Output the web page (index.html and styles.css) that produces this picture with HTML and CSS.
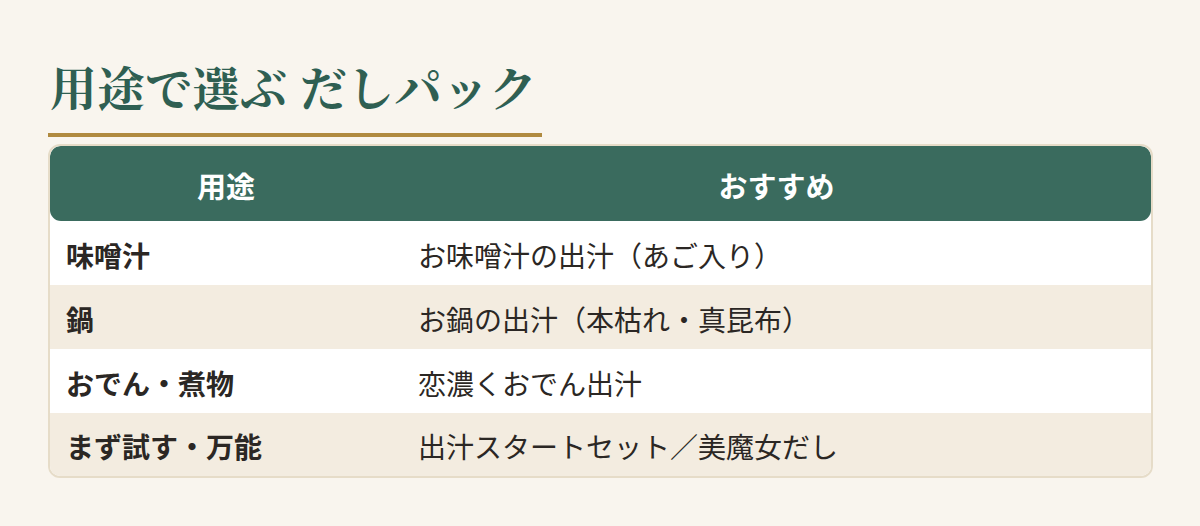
FILE: index.html
```html
<!DOCTYPE html>
<html lang="ja">
<head>
<meta charset="utf-8">
<title>用途で選ぶ だしパック</title>
<link rel="stylesheet" href="styles.css">
</head>
<body>
<main class="page">
  <h2 class="title">用途で選ぶ だしパック</h2>
  <div class="table">
    <div class="head">
      <div class="hcell">用途</div>
      <div class="hcell">おすすめ</div>
    </div>
    <div class="row">
      <div class="c1">味噌汁</div>
      <div class="c2">お味噌汁の出汁（あご入り）</div>
    </div>
    <div class="row alt">
      <div class="c1">鍋</div>
      <div class="c2">お鍋の出汁（本枯れ・真昆布）</div>
    </div>
    <div class="row">
      <div class="c1">おでん・煮物</div>
      <div class="c2">恋濃くおでん出汁</div>
    </div>
    <div class="row alt last">
      <div class="c1">まず試す・万能</div>
      <div class="c2">出汁スタートセット／美魔女だし</div>
    </div>
  </div>
</main>
</body>
</html>
```
FILE: styles.css
```css
html, body {
  margin: 0;
  padding: 0;
  background: #f9f5ee;
}
body {
  font-family: "Noto Sans CJK JP", "Noto Sans", sans-serif;
  color: #2b2724;
}
.page {
  padding: 56px 47px 0 48px;
}
.title {
  display: inline-block;
  margin: 0;
  padding: 0 5px 17px 2px;
  font-family: "Noto Serif CJK JP", "Noto Sans CJK JP", serif;
  font-size: 47px;
  line-height: 60px;
  font-weight: 700;
  color: #2f5f52;
  letter-spacing: 0.5px;
  border-bottom: 4px solid #b08a40;
}
.table {
  margin-top: 7px;
  border: 2px solid #e6dcc8;
  border-radius: 12px;
  background: #ffffff;
  overflow: hidden;
}
.head {
  display: grid;
  grid-template-columns: 352px 1fr;
  height: 75px;
  background: #3a6b5e;
  border-radius: 11px;
  color: #ffffff;
  font-weight: 700;
  font-size: 29px;
}
.hcell {
  display: flex;
  align-items: center;
  justify-content: center;
  padding-top: 2px;
}
.row {
  display: grid;
  grid-template-columns: 352px 1fr;
  height: 64px;
  align-items: center;
  font-size: 28px;
  background: #ffffff;
  padding-top: 3px;
  box-sizing: border-box;
}
.row.alt {
  background: #f3ece0;
}
.row.last {
  height: 63px;
}
.c1 {
  padding-left: 16px;
  font-weight: 700;
}
.c2 {
  padding-left: 16px;
}
```
